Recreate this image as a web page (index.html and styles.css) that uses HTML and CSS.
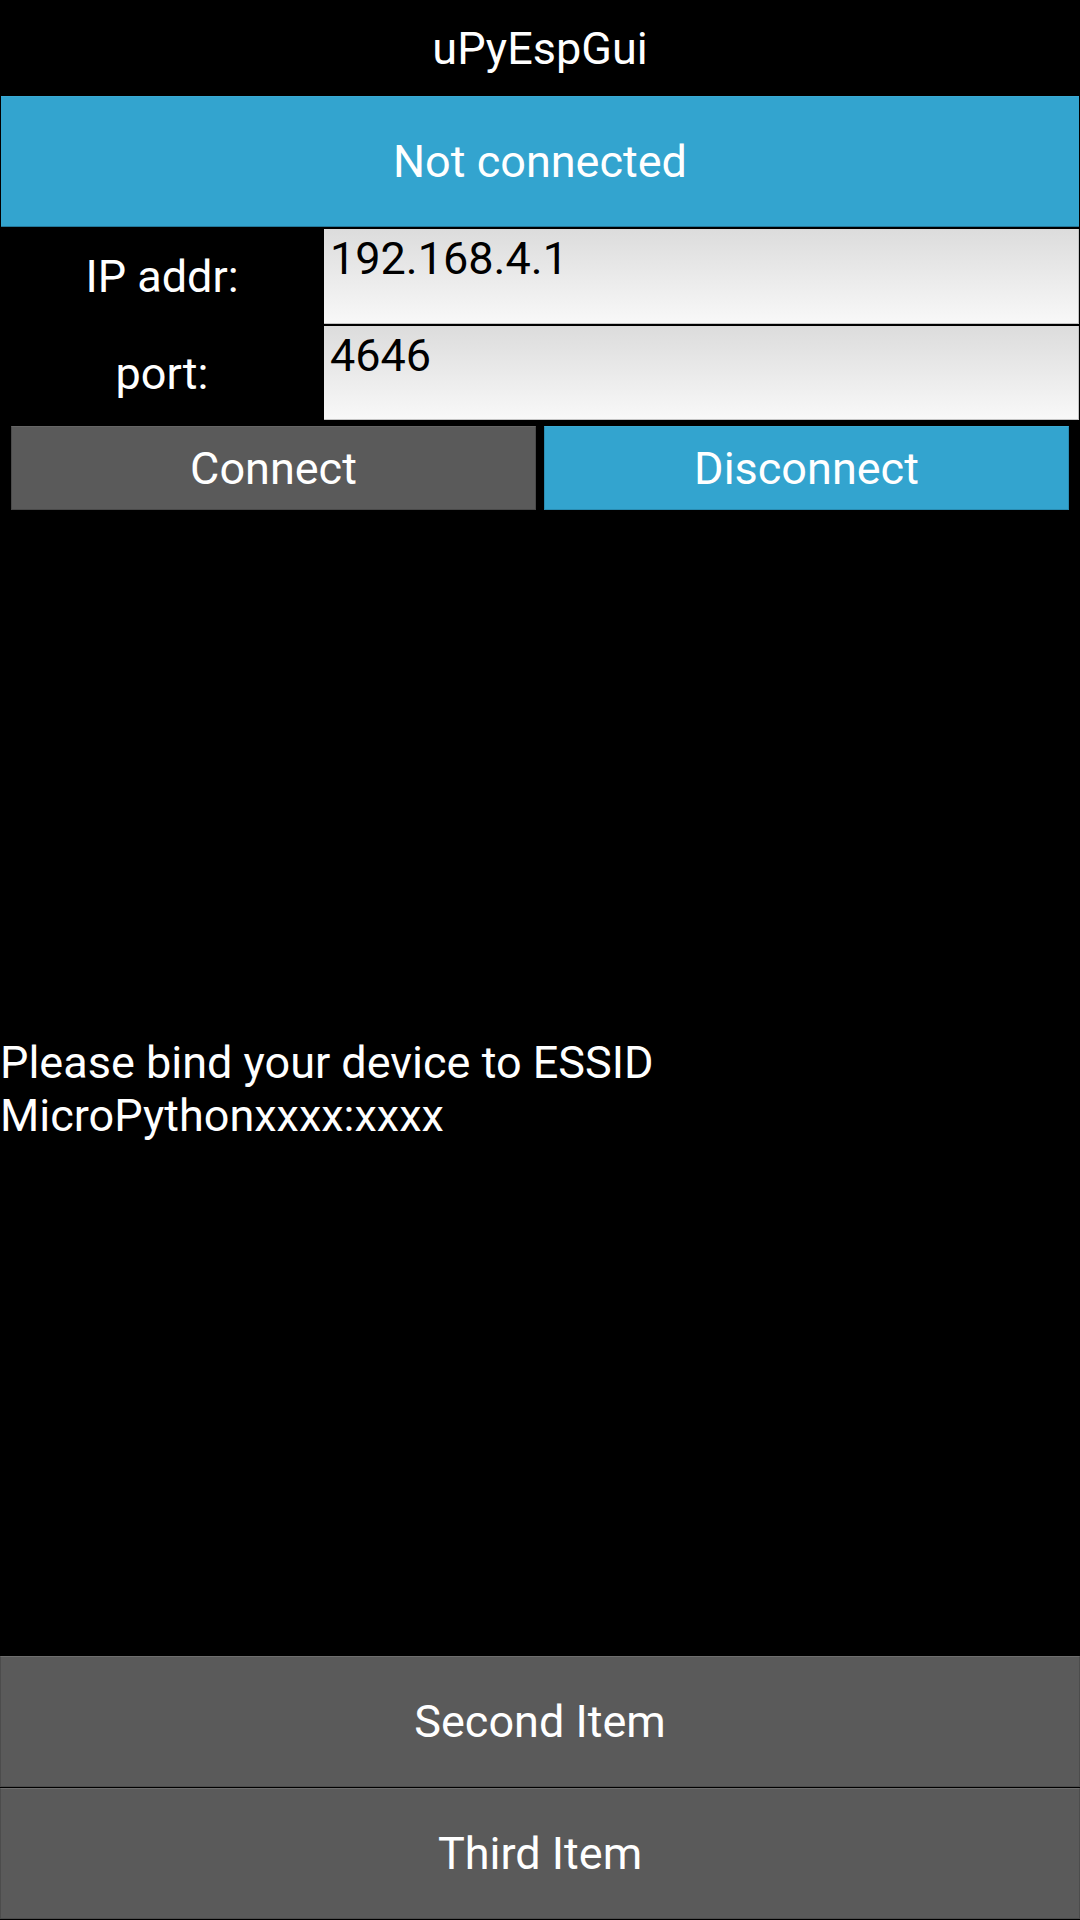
FILE: index.html
```html
<!DOCTYPE html>
<html>
<head>
<meta charset="utf-8">
<title>uPyEspGui</title>
<link rel="stylesheet" href="styles.css">
</head>
<body>
<div class="app">
  <header class="title">uPyEspGui</header>
  <div class="status">Not connected</div>
  <div class="form">
    <div class="label">IP addr:</div>
    <div class="field">192.168.4.1</div>
    <div class="label">port:</div>
    <div class="field">4646</div>
  </div>
  <div class="actions">
    <div class="btn btn-gray">Connect</div>
    <div class="btn btn-blue">Disconnect</div>
  </div>
  <main class="content">
    <p class="message">Please bind your device to ESSID<br>MicroPythonxxxx:xxxx</p>
  </main>
  <nav class="menu">
    <div class="item">Second Item</div>
    <div class="item">Third Item</div>
  </nav>
</div>
</body>
</html>
```
FILE: styles.css
```css
html, body {
  margin: 0;
  padding: 0;
  background: #000;
}
body {
  width: 1080px;
  height: 1920px;
  overflow: hidden;
  font-family: Roboto, "Noto Sans", sans-serif;
  font-size: 45px;
  color: #fff;
}
.app {
  display: flex;
  flex-direction: column;
  height: 1920px;
}
.title {
  height: 96px;
  display: flex;
  align-items: center;
  justify-content: center;
}
.status {
  height: 129px;
  margin: 0 1px;
  background: #33a4cf;
  border-top: 1px solid #3aaad4;
  border-bottom: 1px solid #24789a;
  display: flex;
  align-items: center;
  justify-content: center;
}
.form {
  margin-top: 2px;
  display: grid;
  grid-template-columns: 324px 1fr;
  grid-template-rows: 95px 94px;
  row-gap: 2px;
}
.label {
  display: flex;
  align-items: center;
  justify-content: center;
}
.field {
  margin-right: 1px;
  background: linear-gradient(#dcdcdc, #f8f8f8);
  border-right: 1px solid #c4c4c4;
  border-bottom: 1px solid #c4c4c4;
  color: #000;
  padding: 4px 0 0 6px;
  line-height: 1.172;
}
.actions {
  margin-top: 6px;
  padding: 0 11px;
  display: flex;
  gap: 8px;
  height: 84px;
}
.btn {
  flex: 1;
  display: flex;
  align-items: center;
  justify-content: center;
  box-sizing: border-box;
}
.btn-gray {
  background: #5a5a5a;
  border: 1px solid #4a4a4a;
  border-top-color: #666;
}
.btn-blue {
  background: #33a4cf;
  border: 1px solid #2a8cb2;
  border-top-color: #3aaad4;
}
.content {
  flex: 1;
  display: flex;
  align-items: center;
}
.message {
  margin: 0;
  line-height: 1.172;
  margin-top: 13px;
}
.menu {
  display: flex;
  flex-direction: column;
  gap: 1px;
  margin-bottom: 1px;
}
.item {
  height: 131px;
  box-sizing: border-box;
  background: #5a5a5a;
  border: 1px solid #4c4c4c;
  border-top-color: #6e6e6e;
  display: flex;
  align-items: center;
  justify-content: center;
}
```
